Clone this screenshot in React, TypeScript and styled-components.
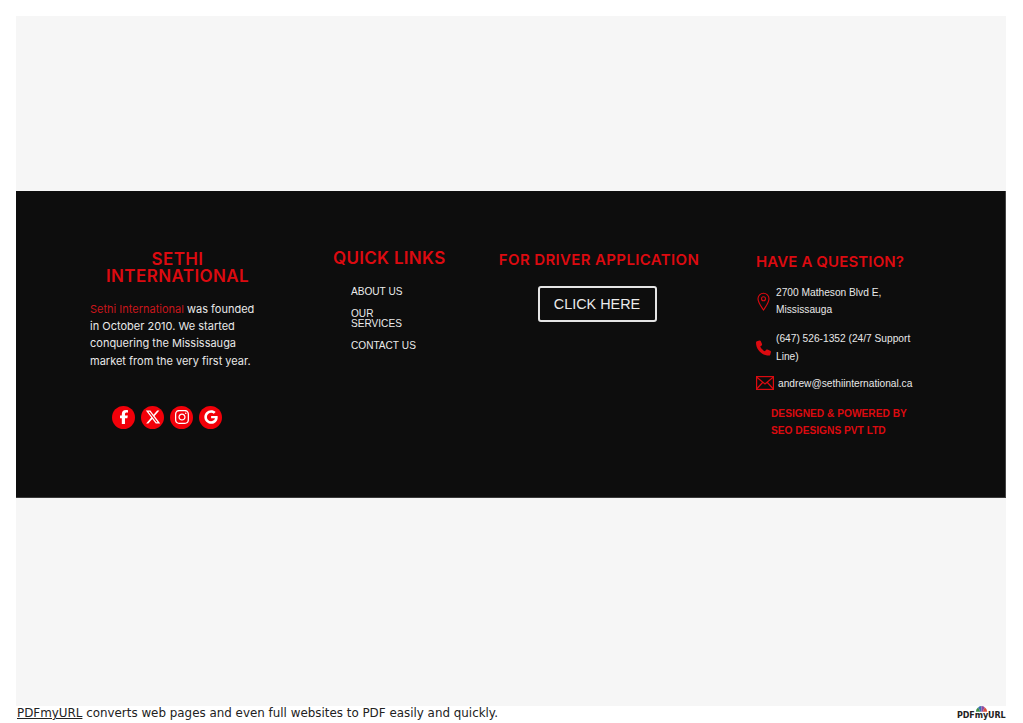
import React from "react";
import styled, { createGlobalStyle } from "styled-components";
import { FaFacebookF, FaXTwitter, FaInstagram, FaGoogle, FaPhone } from "react-icons/fa6";

const Global = createGlobalStyle`
  html, body { margin: 0; padding: 0; background: #fff; }
  body { width: 1023px; height: 723px; overflow: hidden; font-family: "Liberation Sans", Arial, sans-serif; }
`;
const RED = "#dc0a10";
const HEAD = `"Inter", "Noto Sans", sans-serif`;

const Page = styled.div`
  display: flex; flex-direction: column; width: 1023px; height: 723px;
  padding: 16px 17px 0 16px; box-sizing: border-box;
`;
const GrayBand = styled.div<{ $h: number }>`
  height: ${p => p.$h}px; background: #f6f6f6; flex: none;
`;
const Footer = styled.footer`
  height: 307px; flex: none; background: #0d0d0d; box-sizing: border-box;
  padding-left: 74px; display: grid; grid-template-columns: 243px 164px 259px 1fr;
  border-bottom: 1px solid #3a3a3a; border-right: 1px solid #444;
`;
const Col = styled.div<{ $top: number }>`
  padding-top: ${p => p.$top}px; min-width: 0;
`;
const Title = styled.h2<{ $size: number; $center?: boolean; $spacing?: number; $width?: number; $shift?: number }>`
  margin: 0 0 0 ${p => p.$shift ?? 0}px; font-family: ${HEAD}; font-weight: 600; color: ${RED};
  font-size: ${p => p.$size}px; line-height: 17px; white-space: nowrap;
  letter-spacing: ${p => p.$spacing ?? 0}px;
  width: ${p => (p.$width ? `${p.$width}px` : "auto")};
  text-align: ${p => (p.$center ? "center" : "left")};
`;
const About = styled.p`
  margin: 16px 0 0; width: 175px; font-family: ${HEAD}; font-size: 11px; line-height: 17.2px;
  color: #e8e8e8; white-space: nowrap;
`;
const RedSpan = styled.span` color: #c8161c; `;
const Socials = styled.div` display: flex; gap: 6px; margin: 36px 0 0 22px; `;
const Social = styled.a`
  width: 23px; height: 23px; border-radius: 50%; background: #f20009; color: #fff;
  display: flex; align-items: center; justify-content: center; font-size: 14px;
`;
const Links = styled.ul`
  list-style: none; margin: 20px 0 0; padding: 0 0 0 18px; width: 60px; color: #ebebeb;
  font-size: 10.1px; line-height: 10.7px;
`;
const LinkItem = styled.li` margin-bottom: 11px; `;
const CtaWrap = styled.div` width: 200px; display: flex; flex-direction: column; align-items: center; `;
const Cta = styled.a`
  margin-top: 18px; width: 119px; height: 36px; box-sizing: border-box; border: 2px solid #e4e4e4; border-radius: 3px;
  display: flex; align-items: center; justify-content: center; color: #ebebeb; font-size: 14.4px;
`;
const Contact = styled.div<{ $gap: number; $mt: number }>`
  display: flex; align-items: center; gap: ${p => p.$gap}px; margin-top: ${p => p.$mt}px;
  color: #e8e8e8; font-size: 10.2px; line-height: 17.2px; white-space: nowrap;
`;
const IconBox = styled.div<{ $w: number }>`
  width: ${p => p.$w}px; flex: none; display: flex; justify-content: center; color: ${RED};
`;
const Powered = styled.div`
  margin: 13px 0 0 15px; color: ${RED}; font-weight: 700; font-size: 10.2px; line-height: 17.2px; white-space: nowrap;
`;
const BottomBar = styled.div`
  flex: none; height: 16px; margin-left: 1px; display: flex; justify-content: space-between; position: relative;
  font-family: "DejaVu Sans", Verdana, sans-serif; font-size: 11.9px; line-height: 14px; color: #222;
  white-space: nowrap;
`;
const BarLink = styled.a` text-decoration: underline; color: #222; `;
const BarText = styled.div``;
const Logo = styled.div`
  position: absolute; right: 0; top: 0; width: 50px; height: 16px;
`;
const LogoText = styled.div`
  position: absolute; left: 1px; top: 4px; font-family: "DejaVu Sans", sans-serif; font-weight: 700;
  font-size: 8px; line-height: 12px; color: #222; letter-spacing: -0.1px;
`;
const LogoFan = styled.svg`
  position: absolute; top: -1px; left: 19px;
`;

export default function App() {
  return (
    <Page>
      <Global />
      <GrayBand $h={175} />
      <Footer>
        <Col $top={60}>
          <Title $size={17} $center $spacing={0.4} $width={175}>SETHI<br />INTERNATIONAL</Title>
          <About>
            <RedSpan>Sethi International</RedSpan> was founded<br />
            in October 2010. We started<br />
            conquering the Mississauga<br />
            market from the very first year.
          </About>
          <Socials>
            <Social><FaFacebookF /></Social>
            <Social><FaXTwitter size={16} /></Social>
            <Social><FaInstagram size={16} /></Social>
            <Social><FaGoogle /></Social>
          </Socials>
        </Col>
        <Col $top={59}>
          <Title $size={17} $spacing={0.3}>QUICK LINKS</Title>
          <Links>
            <LinkItem>ABOUT&nbsp;US</LinkItem>
            <LinkItem>OUR SERVICES</LinkItem>
            <LinkItem>CONTACT&nbsp;US</LinkItem>
          </Links>
        </Col>
        <Col $top={60}>
          <CtaWrap>
            <Title $size={15} $center $spacing={0.36} $shift={4}>FOR DRIVER APPLICATION</Title>
            <Cta>CLICK HERE</Cta>
          </CtaWrap>
        </Col>
        <Col $top={62}>
          <Title $size={15} $spacing={0.13}>HAVE A QUESTION?</Title>
          <Contact $gap={5} $mt={14}>
            <IconBox $w={15}>
              <svg width="13" height="19" viewBox="0 0 13 19" fill="none" stroke="currentColor" strokeWidth="1.1">
                <path d="M6.5 18C4 14 1 10.5 1 6.7a5.5 5.5 0 0 1 11 0C12 10.5 9 14 6.5 18Z" />
                <circle cx="6.5" cy="6.7" r="2" />
              </svg>
            </IconBox>
            <div>2700 Matheson Blvd E,<br />Mississauga</div>
          </Contact>
          <Contact $gap={5} $mt={12}>
            <IconBox $w={15}><FaPhone size={16} /></IconBox>
            <div>(647) 526-1352 (24/7 Support<br />Line)</div>
          </Contact>
          <Contact $gap={4} $mt={10}>
            <IconBox $w={18}>
              <svg width="18" height="14" viewBox="0 0 18 14" fill="none" stroke="currentColor" strokeWidth="1.2">
                <rect x="0.6" y="0.6" width="16.800" height="12.800" />
                <path d="M0.6 1 9 8l8.400-7M0.600 13l6-6.500M17.400 13l-6-6.500" />
              </svg>
            </IconBox>
            <div>andrew@sethiinternational.ca</div>
          </Contact>
          <Powered>DESIGNED &amp; POWERED BY<br />SEO DESIGNS PVT LTD</Powered>
        </Col>
      </Footer>
      <GrayBand $h={208} />
      <BottomBar>
        <BarText><BarLink>PDFmyURL</BarLink> converts web pages and even full websites to PDF easily and quickly.</BarText>
        <Logo>
          <LogoFan width="13" height="7" viewBox="0 0 16 8">
            <path d="M1 8A7 7 0 0 1 4 2.500L6.500 8Z" fill="#3f8f4a" />
            <path d="M4 2.500A7 7 0 0 1 8 1V8H6.500Z" fill="#3a6fb5" />
            <path d="M8 1A7 7 0 0 1 12 2.500L9.500 8H8Z" fill="#8e4aa0" />
            <path d="M12 2.500A7 7 0 0 1 15 8H9.500Z" fill="#d8503f" />
          </LogoFan>
          <LogoText>PDFmyURL</LogoText>
        </Logo>
      </BottomBar>
    </Page>
  );
}
